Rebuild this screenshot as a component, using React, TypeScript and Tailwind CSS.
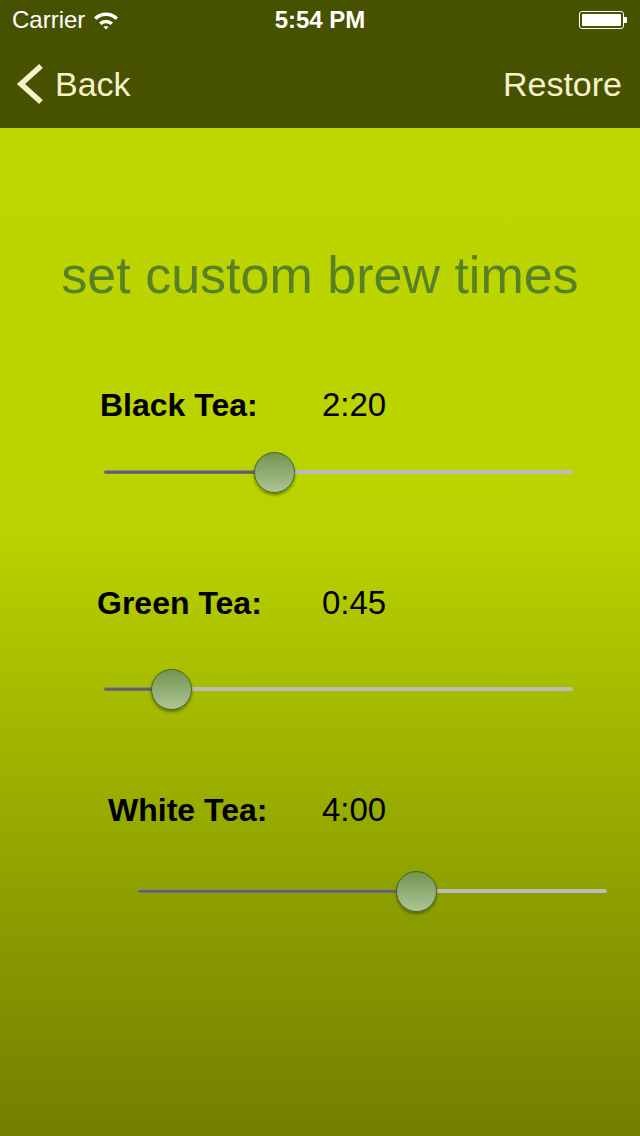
import React from "react";

type TeaRow = {
  name: string;
  time: string;
  labelLeft: string;
  labelWidth: string;
  sliderLeft: string;
  thumb: number;
  rowTop: string;
  sliderTop: string;
};

const rows: TeaRow[] = [
  { name: "Black Tea:", time: "2:20", labelLeft: "pl-[100px]", labelWidth: "w-[222px]", sliderLeft: "ml-[104px]", thumb: 170, rowTop: "mt-[80px]", sliderTop: "mt-[26px]" },
  { name: "Green Tea:", time: "0:45", labelLeft: "pl-[97px]", labelWidth: "w-[225px]", sliderLeft: "ml-[104px]", thumb: 67, rowTop: "mt-[90px]", sliderTop: "mt-[45px]" },
  { name: "White Tea:", time: "4:00", labelLeft: "pl-[108px]", labelWidth: "w-[214px]", sliderLeft: "ml-[138px]", thumb: 278, rowTop: "mt-[80px]", sliderTop: "mt-[40px]" },
];

const Wifi = () => (
  <svg width="26" height="20" viewBox="0 0 26 20">
    <path d="M1 7.5 A17 17 0 0 1 25 7.5 L22.5 10 A13.5 13.5 0 0 0 3.5 10 Z" fill="white" />
    <path d="M6 12.5 A10 10 0 0 1 20 12.5 L17.5 15 A6.5 6.5 0 0 0 8.5 15 Z" fill="white" />
    <path d="M10.5 17 A4 4 0 0 1 15.5 17 L13 19.5 Z" fill="white" />
  </svg>
);

const Battery = () => (
  <div className="flex items-center">
    <div className="w-[45px] h-[18px] rounded-[3px] border border-white p-[2px]">
      <div className="w-full h-full bg-white rounded-[1px]" />
    </div>
    <div className="w-[3px] h-[6px] bg-white rounded-r-[1px]" />
  </div>
);

const Slider = ({ left, thumb }: { left: string; thumb: number }) => (
  <div className={`${left} relative w-[469px] h-[42px]`}>
    <div className="absolute left-0 right-0 top-[19px] h-[4px] rounded-full bg-[#bcbcbc]" />
    <div
      className="absolute left-0 top-[19px] h-[4px] rounded-l-full bg-gradient-to-b from-[#9a9a9a] via-[#555555] to-[#7a7a7a]"
      style={{ width: thumb }}
    />
    <div
      className="absolute top-[1px] w-[41px] h-[41px] rounded-full border-[1.5px] border-[#46642a] bg-gradient-to-b from-[#749450] to-[#adc596] shadow-[0_2px_3px_rgba(40,60,0,0.55)]"
      style={{ left: thumb - 20 }}
    />
  </div>
);

export default function App() {
  return (
    <div className="w-[640px] h-[1136px] flex flex-col font-['Liberation_Sans',Arial,sans-serif]">
      <div className="bg-[#465200] h-[128px] flex flex-col">
        <div className="h-[40px] flex items-center justify-between pl-[12px] pr-[13px] text-white text-[24px] relative">
          <div className="flex items-center gap-[8px]">
            <span>Carrier</span>
            <Wifi />
          </div>
          <span className="absolute left-0 right-0 text-center font-bold pointer-events-none">5:54 PM</span>
          <Battery />
        </div>
        <div className="h-[88px] flex items-center justify-between pl-[15px] pr-[18px] text-[#f6f1c8] text-[34px]">
          <div className="flex items-center gap-[10px]">
            <svg width="30" height="42" viewBox="0 0 30 42">
              <polyline points="26,3 6,21 26,39" fill="none" stroke="#f6f1c8" strokeWidth="5.5" strokeLinejoin="miter" />
            </svg>
            <span>Back</span>
          </div>
          <span>Restore</span>
        </div>
      </div>

      <div className="flex-1 flex flex-col bg-gradient-to-b from-[#bdd600] via-[#bad300] via-40% to-[#727f00]">
        <div className="mt-[117px] h-[60px] leading-[60px] text-center text-[52px] text-[#588125]">
          set custom brew times
        </div>
        {rows.map((r) => (
          <div key={r.name} className="flex flex-col">
            <div className={`${r.rowTop} ${r.labelLeft} h-[40px] flex items-center text-[32px] text-black`}>
              <span className={`${r.labelWidth} font-bold`}>{r.name}</span>
              <span className="text-[33px]">{r.time}</span>
            </div>
            <div className={r.sliderTop}>
              <Slider left={r.sliderLeft} thumb={r.thumb} />
            </div>
          </div>
        ))}
      </div>
    </div>
  );
}
